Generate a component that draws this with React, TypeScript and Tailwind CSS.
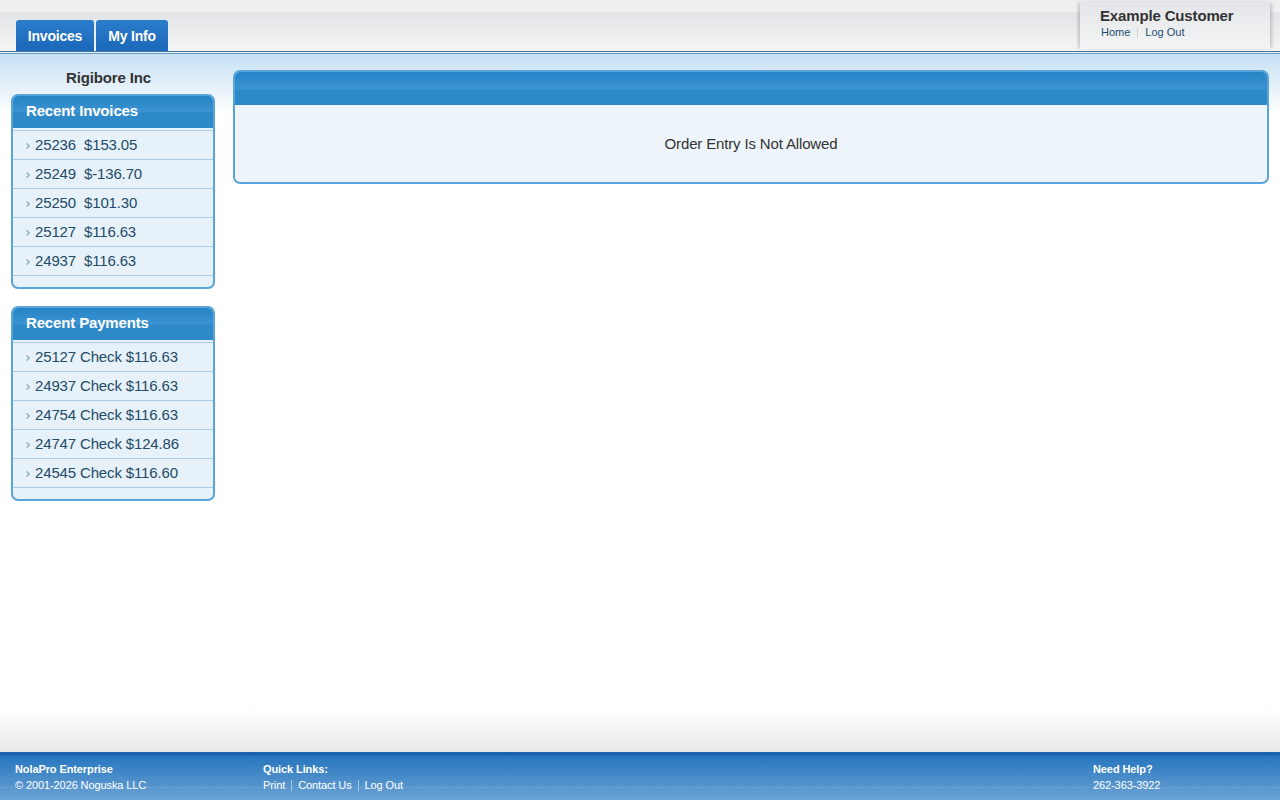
import React from "react";

const invoices = ["25236  $153.05", "25249  $-136.70", "25250  $101.30", "25127  $116.63", "24937  $116.63"];
const payments = ["25127 Check $116.63", "24937 Check $116.63", "24754 Check $116.63", "24747 Check $124.86", "24545 Check $116.60"];

function Arrow() {
  return (
    <svg width="4" height="6" viewBox="0 0 4 6" className="shrink-0">
      <path d="M0.5 0.5 L3.5 3 L0.5 5.5" fill="none" stroke="#8aa6bb" strokeWidth="1.2" />
    </svg>
  );
}

function Panel({ title, items }: { title: string; items: string[] }) {
  return (
    <div className="w-[204px] rounded-[7px] border-2 border-[#5aa5d8] bg-[#e6f1f9] overflow-hidden">
      <div className="h-[34px] -mx-[2px] -mt-[2px] rounded-t-[7px] bg-[linear-gradient(to_bottom,#2482c5_0%,#3b93d1_52%,#2e89c9_56%,#2e89c9_100%)] flex items-center pl-[15px] text-[15px] font-bold text-white tracking-[-0.15px]">
        {title}
      </div>
      <div className="border-t border-[#a9cce6] mt-[2px]">
        {items.map((t) => (
          <div key={t} className="h-[29px] border-b border-[#a9cce6] flex items-center pl-[13px] gap-[5px] pt-[1px] text-[15px] text-[#244b68] whitespace-pre tracking-[-0.15px]">
            <Arrow />
            <span>{t}</span>
          </div>
        ))}
        <div className="h-[11px]" />
      </div>
    </div>
  );
}

export default function App() {
  return (
    <div className="h-[800px] w-[1280px] flex flex-col font-['Liberation_Sans',Arial,sans-serif] overflow-hidden">
      {/* Header */}
      <div className="h-[51px] shrink-0 bg-[linear-gradient(to_bottom,#efefef_0px,#efefef_12px,#e2e4e7_13px,#f5f5f5_51px)] flex items-end justify-between relative">
        <div className="flex gap-[2px] pl-[16px]">
          <div className="w-[78px] h-[31px] pt-[1px] rounded-t-[3px] bg-[linear-gradient(to_bottom,#2c7dcd,#1b67b9)] flex items-center justify-center text-white font-bold text-[14px] tracking-[-0.2px]">Invoices</div>
          <div className="w-[72px] h-[31px] pt-[1px] rounded-t-[3px] bg-[linear-gradient(to_bottom,#2c7dcd,#1b67b9)] flex items-center justify-center text-white font-bold text-[14px] tracking-[-0.2px]">My Info</div>
        </div>
        <div className="self-start mt-[2px] mr-[10px] w-[190px] h-[47px] bg-[linear-gradient(to_bottom,#e4e6e9,#f3f4f5)] shadow-[-3px_0_3px_-1px_rgba(0,0,0,0.18),3px_0_3px_-1px_rgba(0,0,0,0.18)] pl-[20px] pt-[5px]">
          <div className="text-[15px] font-bold text-[#333] leading-[17px] tracking-[-0.15px]">Example Customer</div>
          <div className="flex items-center text-[11px] text-[#1d4e70] pl-[1px] leading-[13px] mt-[2px]">
            <span>Home</span>
            <span className="mx-[7px] h-[10px] w-px bg-[#d0d0d0]" />
            <span>Log Out</span>
          </div>
        </div>
      </div>
      <div className="h-px bg-[#3f76a2]" />
      <div className="h-px bg-[#e6f0f7]" />
      <div className="h-px bg-[#6b9dc4]" />

      {/* Content */}
      <div className="flex-1 flex bg-[linear-gradient(to_bottom,#c6e0f3_0px,#ffffff_60px,#ffffff_calc(100%_-_45px),#e8e8e8_100%)]">
        <div className="pl-[11px] w-[222px] shrink-0">
          <div className="h-[40px] pt-[13px] pr-[16px] text-center text-[15px] font-bold text-[#333] tracking-[-0.15px]">Rigibore Inc</div>
          <Panel title="Recent Invoices" items={invoices} />
          <div className="h-[17px]" />
          <Panel title="Recent Payments" items={payments} />
        </div>
        <div className="flex-1 pl-[11px] pr-[11px] pt-[16px]">
          <div className="rounded-[7px] border-2 border-[#5aa5d8] bg-[#edf5fa] overflow-hidden">
            <div className="h-[35px] -mx-[2px] -mt-[2px] rounded-t-[7px] bg-[linear-gradient(to_bottom,#2482c5_0%,#3b93d1_54%,#2e89c9_58%,#2e89c9_100%)]" />
            <div className="h-[77px] pt-[2px] flex items-center justify-center text-[15px] text-[#333] tracking-[-0.15px]">Order Entry Is Not Allowed</div>
          </div>
        </div>
      </div>

      {/* Footer */}
      <div className="h-[48px] shrink-0 relative bg-[linear-gradient(to_bottom,#1b62ae_0px,#1b62ae_3px,#2776bf_4px,#6ca3d4_100%)] text-white text-[11px] leading-[16px] flex tracking-[-0.1px]">
        <div className="absolute left-0 right-0 top-[35px] border-t border-dashed border-[#8db8df] opacity-40" />
        <div className="relative w-[263px] pl-[15px] pt-[9px]">
          <div className="font-bold">NolaPro Enterprise</div>
          <div>© 2001-2026 Noguska LLC</div>
        </div>
        <div className="relative flex-1 pt-[9px]">
          <div className="font-bold">Quick Links:</div>
          <div className="flex items-center">
            <span>Print</span>
            <span className="mx-[6px] h-[11px] w-px bg-[#a8c8e6]" />
            <span>Contact Us</span>
            <span className="mx-[6px] h-[11px] w-px bg-[#a8c8e6]" />
            <span>Log Out</span>
          </div>
        </div>
        <div className="relative w-[187px] pt-[9px]">
          <div className="font-bold">Need Help?</div>
          <div>262-363-3922</div>
        </div>
      </div>
    </div>
  );
}
